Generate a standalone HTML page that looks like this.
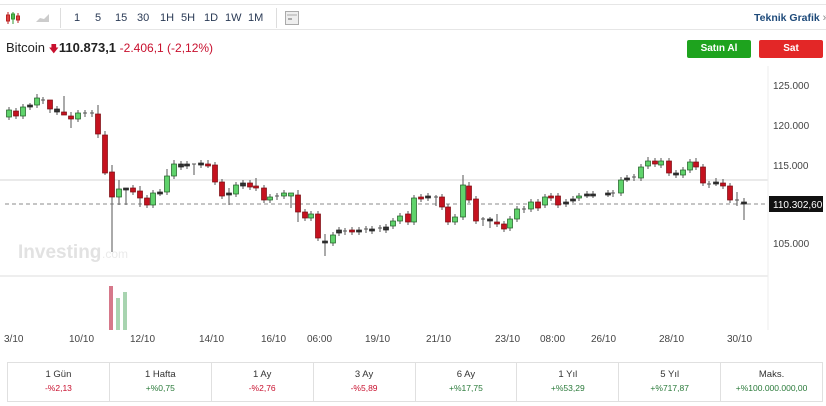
<!DOCTYPE html>
<html><head><meta charset="utf-8"><style>
*{margin:0;padding:0;box-sizing:border-box}
body{width:826px;height:406px;background:#fff;font-family:"Liberation Sans",sans-serif;position:relative;overflow:hidden;color:#333}
.tb{position:absolute;left:0;top:4px;width:826px;height:26px;border-top:1px solid #e6e6e6;border-bottom:1px solid #e6e6e6}
.tb span{position:absolute;top:7px;font-size:11px;color:#2a3a55;white-space:nowrap}
.sep{position:absolute;top:3px;width:1px;height:20px;background:#ddd}
.title{position:absolute;left:6px;top:40px;font-size:13px;color:#222;white-space:nowrap}
.btn{position:absolute;top:40px;height:18px;border-radius:2px;color:#fff;font-size:10px;font-weight:bold;text-align:center;line-height:18px}
.ax{position:absolute;left:773px;font-size:10px;color:#444}
.dt{position:absolute;top:334px;font-size:10px;color:#444}
.per{position:absolute;left:7px;top:362px;width:816px;height:40px;border:1px solid #e0e0e0;display:flex}
.per div{flex:1;border-right:1px solid #e0e0e0;text-align:center;font-size:9.5px;padding-top:6px;color:#333}
.per div:last-child{border-right:none}
.per b{display:block;font-weight:normal;font-size:8.5px;margin-top:3px}
.n{color:#c8102e}.p{color:#2a7a3a}
</style></head><body>
<div class="tb">
<svg style="position:absolute;left:5px;top:6px" width="16" height="14"><g stroke="#b22" stroke-width="1"><line x1="3" y1="1" x2="3" y2="13"/><rect x="1.5" y="4" width="3" height="6" fill="#d44"/><line x1="8" y1="1" x2="8" y2="13" stroke="#393"/><rect x="6.5" y="3" width="3" height="5" fill="#5b5" stroke="#393"/><line x1="13" y1="2" x2="13" y2="12"/><rect x="11.5" y="5" width="3" height="4" fill="#d44"/></g></svg>
<svg style="position:absolute;left:36px;top:8px" width="14" height="10"><path d="M0 9 L4 5 L8 6 L13 1 L13 9Z" fill="#ccc"/></svg>
<div class="sep" style="left:60px"></div>
<span style="left:74px">1</span><span style="left:95px">5</span><span style="left:115px">15</span><span style="left:137px">30</span><span style="left:160px">1H</span><span style="left:181px">5H</span><span style="left:204px">1D</span><span style="left:225px">1W</span><span style="left:248px">1M</span>
<div class="sep" style="left:276px"></div>
<svg style="position:absolute;left:285px;top:6px" width="14" height="14"><rect x="0.5" y="0.5" width="13" height="13" fill="#eee" stroke="#aaa"/><line x1="2" y1="4" x2="12" y2="4" stroke="#aaa"/><rect x="3" y="7" width="4" height="2" fill="#aaa"/></svg>
<span style="left:754px;font-weight:bold;color:#1e4a7a;font-size:10.5px">Teknik Grafik <span style="position:static;color:#888;font-weight:normal">»</span></span>
</div>
<div class="title">Bitcoin <span style="color:#c8102e;font-size:10px">🡇</span><b style="font-size:13px">110.873,1</b> <span style="color:#c8102e;font-size:12px">-2.406,1 (-2,12%)</span></div>
<div class="btn" style="left:687px;width:64px;background:#1ea31e">Satın Al</div>
<div class="btn" style="left:759px;width:64px;background:#e32727">Sat</div>
<svg id="ch" style="position:absolute;left:0;top:0" width="826" height="406">
<line x1="0" y1="180" x2="768" y2="180" stroke="#d4d4d4"/>
<line x1="0" y1="276" x2="768" y2="276" stroke="#ddd"/>
<line x1="768" y1="66" x2="768" y2="330" stroke="#eee"/>
<line x1="5" y1="204" x2="768" y2="204" stroke="#666" stroke-dasharray="4,3" stroke-width="0.8"/>
<text x="18" y="258" font-family="Liberation Sans" font-size="19" font-weight="bold" fill="#e2e2e2">Investing</text><text x="102" y="258" font-family="Liberation Sans" font-size="12" fill="#eaeaea">.com</text>
<rect x="109" y="286" width="4" height="44" fill="#d6788a"/><rect x="116" y="298" width="4" height="32" fill="#a8d4b0"/><rect x="123" y="292" width="4" height="38" fill="#a8d4b0"/>
<g id="cd"></g>
<rect x="769" y="196" width="54" height="16" fill="#111"/>
<text x="773" y="208" font-family="Liberation Sans" font-size="10" fill="#fff">110.302,60</text>
</svg>
<div class="ax" style="top:81px">125.000</div><div class="ax" style="top:121px">120.000</div><div class="ax" style="top:161px">115.000</div><div class="ax" style="top:239px">105.000</div>
<div class="dt" style="left:4px">3/10</div><div class="dt" style="left:69px">10/10</div><div class="dt" style="left:130px">12/10</div><div class="dt" style="left:199px">14/10</div><div class="dt" style="left:261px">16/10</div><div class="dt" style="left:307px">06:00</div><div class="dt" style="left:365px">19/10</div><div class="dt" style="left:426px">21/10</div><div class="dt" style="left:495px">23/10</div><div class="dt" style="left:540px">08:00</div><div class="dt" style="left:591px">26/10</div><div class="dt" style="left:659px">28/10</div><div class="dt" style="left:727px">30/10</div>
<div class="per">
<div>1 Gün<b class="n">-%2,13</b></div><div>1 Hafta<b class="p">+%0,75</b></div><div>1 Ay<b class="n">-%2,76</b></div><div>3 Ay<b class="n">-%5,89</b></div><div>6 Ay<b class="p">+%17,75</b></div><div>1 Yıl<b class="p">+%53,29</b></div><div>5 Yıl<b class="p">+%717,87</b></div><div>Maks.<b class="p">+%100.000.000,00</b></div>
</div>
<script>
var C=[[9,110,117,'g'],[16,111,116,'r'],[23,107,116,'g',104],[30,105,107,'d',103,110],[37,98,105,'g',94],[43,100,101,'x',97,104],[50,100,109,'r',100,113],[57,109,112,'d'],[64,112,115,'r',96,115],[71,116,119,'r',112,128],[78,113,119,'g'],[85,113,114,'x'],[92,113,114,'x'],[98,114,134,'r',105,138],[105,135,173,'r',131,175],[112,172,197,'r',165,252],[119,189,197,'g',180,205],[126,188,190,'d',188,205],[133,188,192,'r'],[140,191,198,'r',186,207],[147,198,205,'r'],[153,193,205,'g'],[160,192,193,'d'],[167,176,192,'g',169],[174,164,176,'g',160],[181,164,167,'d'],[187,164,166,'d'],[194,164,165,'x',164,175],[201,163,165,'d'],[208,164,165,'r',160],[215,165,182,'r'],[222,182,196,'r'],[229,193,195,'d',188,205],[236,185,194,'g'],[243,183,186,'d',180,189],[250,183,187,'r',180],[256,186,188,'r',178],[264,188,200,'r'],[270,197,200,'g'],[277,196,197,'x'],[284,193,196,'g'],[291,193,196,'g',193,208],[298,195,212,'r',190,222],[305,212,218,'r'],[311,214,218,'g'],[318,214,238,'r'],[325,241,243,'d',234,256],
[333,235,243,'g'],[339,230,233,'d'],[345,231,232,'x'],[352,230,232,'r'],[359,230,232,'d'],[366,229,230,'x'],[372,229,231,'d'],[380,228,229,'x'],[386,227,230,'d'],[393,221,226,'g'],[400,216,221,'g'],[408,214,222,'r'],[414,198,222,'g'],[421,197,199,'r'],[428,196,198,'d'],[436,197,198,'x',195,206],[442,197,207,'r'],[448,207,222,'r'],[455,217,222,'g'],[463,185,217,'g',175],[469,186,200,'r',182],[476,199,221,'r'],[483,219,220,'x',217,226],[490,219,221,'d',217,228],[497,222,224,'r',214],[504,224,229,'r'],[510,219,228,'g'],[517,209,219,'g'],[524,209,210,'x'],[531,202,209,'g'],[538,202,208,'r'],[545,197,205,'g'],[551,196,198,'r'],[558,196,205,'r'],[566,202,204,'d'],[573,199,200,'d'],[579,196,198,'g'],[587,194,195,'d'],[593,194,195,'d'],[608,193,194,'d'],[613,193,194,'x'],[621,180,193,'g'],[627,178,179,'d'],[634,177,178,'x'],[641,167,178,'g'],[648,161,166,'g',157],[655,161,164,'r'],[661,161,165,'g'],[669,161,173,'r'],[676,173,175,'d'],[683,170,175,'g'],[690,162,170,'g'],[696,162,167,'r',158],[703,167,183,'r'],[709,184,185,'x'],[716,182,183,'d',178],[723,183,186,'r',179],[730,186,200,'r'],[737,200,201,'x',192,206],[744,202,203,'d',198,220]];
var s='';C.forEach(function(c){var x=c[0],t=c[1],b=c[2],k=c[3],wt=c[4]||t-3,wb=c[5]||b+3;
var f=k=='g'?'#5fd36b':k=='r'?'#c5121f':'#333',st=k=='g'?'#1d5a22':k=='r'?'#7a0a10':'#222';
s+='<line x1="'+x+'" y1="'+wt+'" x2="'+x+'" y2="'+wb+'" stroke="#555" stroke-width="1"/>';
if(k=='x')s+='<line x1="'+(x-2)+'" y1="'+t+'" x2="'+(x+2)+'" y2="'+t+'" stroke="#555"/>';
else s+='<rect x="'+(x-2.5)+'" y="'+t+'" width="5" height="'+Math.max(b-t,2)+'" fill="'+f+'" stroke="'+st+'" stroke-width="0.7"/>';});
document.getElementById('cd').innerHTML=s;
</script>
</body></html>
